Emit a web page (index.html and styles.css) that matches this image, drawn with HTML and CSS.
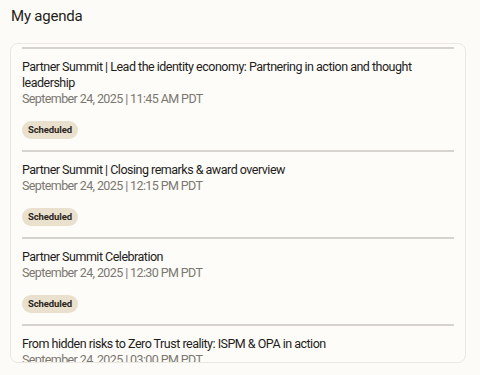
FILE: index.html
```html
<!DOCTYPE html>
<html>
<head>
<meta charset="utf-8">
<link rel="stylesheet" href="styles.css">
</head>
<body>
<div class="page">
  <h1 class="title">My agenda</h1>
  <div class="card">
    <ul class="list">
      <li class="item">
        <div class="item-title">Partner Summit | Lead the identity economy: Partnering in action and thought leadership</div>
        <div class="item-date">September 24, 2025 | 11:45 AM PDT</div>
        <span class="badge">Scheduled</span>
      </li>
      <li class="item">
        <div class="item-title">Partner Summit | Closing remarks &amp; award overview</div>
        <div class="item-date">September 24, 2025 | 12:15 PM PDT</div>
        <span class="badge">Scheduled</span>
      </li>
      <li class="item">
        <div class="item-title">Partner Summit Celebration</div>
        <div class="item-date">September 24, 2025 | 12:30 PM PDT</div>
        <span class="badge">Scheduled</span>
      </li>
      <li class="item">
        <div class="item-title">From hidden risks to Zero Trust reality: ISPM &amp; OPA in action</div>
        <div class="item-date">September 24, 2025 | 03:00 PM PDT</div>
        <span class="badge">Scheduled</span>
      </li>
    </ul>
  </div>
</div>
</body>
</html>
```
FILE: styles.css
```css
* { box-sizing: border-box; }
html, body { margin: 0; padding: 0; background: #fcfbf7; }
body {
  font-family: Roboto, Inter, sans-serif;
  color: #1f1d1a;
  width: 480px;
  height: 375px;
  overflow: hidden;
}
.page { padding: 6px 10px 0 10px; }
.title {
  margin: 0;
  font-size: 15px;
  font-weight: 400;
  line-height: 20px;
  padding-left: 1px;
  letter-spacing: -0.2px;
}
.card {
  margin-top: 17px;
  width: 456px;
  height: 320px;
  border: 1px solid #ebe8e2;
  border-radius: 8px;
  background: #fdfcf9;
  overflow: hidden;
}
.list {
  list-style: none;
  margin: 0;
  padding: 3px 11px 0 11px;
}
.item {
  border-top: 2px solid #d6d3ce;
  padding: 10px 0 11px 0;
}
.item-title {
  font-size: 12.5px;
  line-height: 16px;
  letter-spacing: -0.5px;
}
.item-date {
  font-size: 12.5px;
  line-height: 16px;
  color: #7b7770;
  letter-spacing: -0.6px;
}
.badge {
  display: inline-block;
  margin-top: 14px;
  height: 18px;
  line-height: 18px;
  padding: 0 6px;
  border-radius: 9px;
  background: #e9e0cd;
  font-size: 9.5px;
  font-weight: 700;
  letter-spacing: -0.1px;
  color: #2a2620;
}
```
